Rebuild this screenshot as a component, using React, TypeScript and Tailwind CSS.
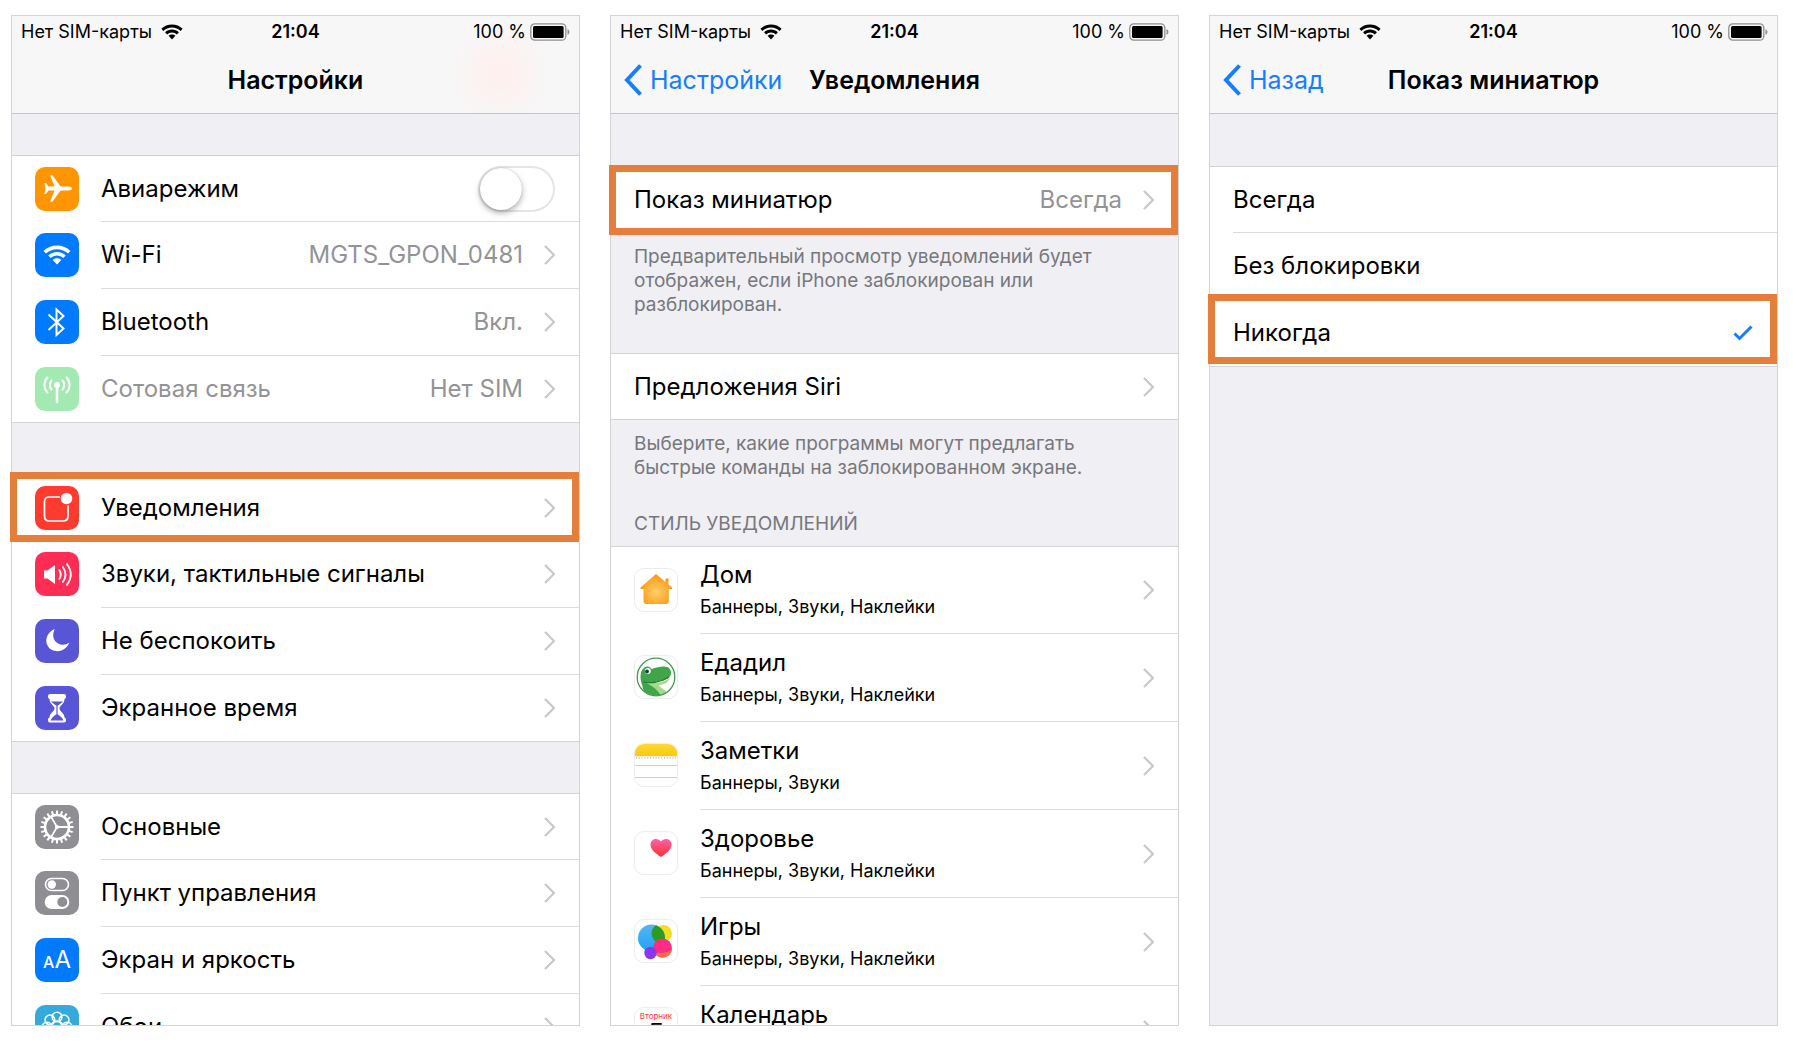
import { useState, type ReactNode } from "react";
import clsx from "clsx";

interface RowData {
  label: string;
  value?: string;
  icon?: ReactNode;
  disabled?: boolean;
  highlight?: string;
}

interface AppData {
  name: string;
  styles: string;
  icon: ReactNode;
}

const GEAR_TEETH = Array.from({ length: 20 }, (_, i) => i * 18);
const PETALS = Array.from({ length: 8 }, (_, i) => i * 45);

function WifiGlyph({ className }: { className?: string }) {
  return (
    <svg viewBox="0 0 28 20" className={className} fill="currentColor" aria-hidden="true">
      <path d="M14 0.5c5.2 0 10 2 13.5 5.4l-2.5 2.7C22.100 5.800 18.200 4.200 14 4.200S5.900 5.800 3 8.600L.5 5.900C4 2.500 8.800.5 14 .5z" />
      <path d="M14 6.900c3.400 0 6.500 1.300 8.800 3.500l-2.600 2.700c-1.600-1.500-3.800-2.500-6.200-2.500s-4.600 1-6.200 2.500l-2.600-2.700C7.500 8.200 10.600 6.900 14 6.900z" />
      <path d="M14 13.200c1.700 0 3.200.6 4.300 1.700L14 19.500l-4.300-4.600c1.100-1.100 2.600-1.700 4.300-1.700z" />
    </svg>
  );
}

function Tile({ color, children }: { color: string; children: ReactNode }) {
  return (
    <span
      className={clsx(
        "flex size-11 shrink-0 items-center justify-center overflow-hidden rounded-[10px] text-white",
        color,
      )}
    >
      {children}
    </span>
  );
}

function AppTile({ children }: { children: ReactNode }) {
  return (
    <span className="flex size-11 shrink-0 overflow-hidden rounded-[10px] border border-[#ececee] bg-white">
      {children}
    </span>
  );
}

function PlaneIcon() {
  return (
    <Tile color="bg-[#ff9500]">
      <svg viewBox="0 0 44 44" className="size-11" fill="currentColor" aria-hidden="true">
        <path d="M37 21.500c0 1.300-1.800 2-4 2h-7.400l-8.200 11.200h-2.300l4.400-11.200h-5.900l-2.700 3.400H9.200l1.300-5.400-1.300-5.400h1.700l2.700 3.400h5.900L15.100 8.300h2.300l8.200 11.200H33c2.200 0 4 .7 4 2z" />
      </svg>
    </Tile>
  );
}

function WifiIcon() {
  return (
    <Tile color="bg-[#007aff]">
      <WifiGlyph className="h-5 w-7" />
    </Tile>
  );
}

function BluetoothIcon() {
  return (
    <Tile color="bg-[#007aff]">
      <svg viewBox="0 0 44 44" className="size-11" fill="none" stroke="currentColor" strokeWidth="2" aria-hidden="true">
        <path d="M13.500 14.500l15 14-7 6.500V9.500l7 6.500-15 14" />
      </svg>
    </Tile>
  );
}

function CellularIcon() {
  return (
    <Tile color="bg-[#a3e9b2]">
      <svg viewBox="0 0 44 44" className="size-11" fill="none" stroke="currentColor" strokeWidth="2" strokeLinecap="round" aria-hidden="true">
        <circle cx="22" cy="18" r="3" fill="currentColor" stroke="none" />
        <path d="M22 19v16" strokeWidth="2.500" />
        <path d="M16.500 13.500c-2.200 2.500-2.200 6.500 0 9M12.500 10.500c-4.200 4.300-4.200 10.700 0 15M27.500 13.500c2.200 2.500 2.200 6.500 0 9M31.500 10.500c4.200 4.300 4.200 10.700 0 15" />
      </svg>
    </Tile>
  );
}

function NotificationsIcon() {
  return (
    <Tile color="bg-[#ff3b30]">
      <svg viewBox="0 0 44 44" className="size-11" aria-hidden="true">
        <path d="M25 11H14.500Q9.500 11 9.500 16v14q0 5 5 5h13.500q5 0 5-5V19.500" fill="none" stroke="#fff" strokeWidth="1.700" />
        <circle cx="31.500" cy="12.500" r="5.800" fill="#fff" />
      </svg>
    </Tile>
  );
}

function SoundsIcon() {
  return (
    <Tile color="bg-[#ff2d55]">
      <svg viewBox="0 0 44 44" className="size-11" aria-hidden="true">
        <path d="M9 18.500h3.500l7.500-5.500v19l-7.500-5.500H9z" fill="#fff" />
        <path d="M24 17.500q3.500 5 0 10M27.500 14.500q6 8 0 16M31.500 11.500q8.500 11 0 22" fill="none" stroke="#fff" strokeWidth="1.800" />
      </svg>
    </Tile>
  );
}

function MoonIcon() {
  return (
    <Tile color="bg-[#5856d6]">
      <svg viewBox="0 0 44 44" className="size-11" fill="#fff" aria-hidden="true">
        <path d="M19.800 10C12.500 13 9.300 20.500 12.500 26.500c4 8 17.500 8 22-3-9 6.500-20.500-2-14.700-13.500z" />
      </svg>
    </Tile>
  );
}

function HourglassIcon() {
  return (
    <Tile color="bg-[#5856d6]">
      <svg viewBox="0 0 44 44" className="size-11" aria-hidden="true">
        <path d="M15 8h14q2 0 2 2v1q0 1.500-1.500 2c0 5-5 6.500-5 9.500s5 4.500 5 9q1.500.5 1.500 2v1q0 2-2 2H15q-2 0-2-2v-1q0-1.500 1.500-2c0-4.500 5-6 5-9s-5-4.500-5-9.500Q13 12.500 13 11v-1q0-2 2-2z" fill="#fff" />
        <path d="M17.500 16h9L22 19.500zM22 20v9M16.500 34q.5-2 5.500-5.500 5 3.500 5.500 5.500z" fill="#5856d6" stroke="#5856d6" strokeWidth="1.200" />
      </svg>
    </Tile>
  );
}

function GearIcon() {
  return (
    <Tile color="bg-[#8e8e93]">
      <svg viewBox="0 0 44 44" className="size-11" fill="none" stroke="#fff" aria-hidden="true">
        <circle cx="22" cy="22" r="12" strokeWidth="2.600" />
        {GEAR_TEETH.map((angle) => (
          <path key={angle} d="M22 9.500V5.500" strokeWidth="2" transform={`rotate(${angle} 22 22)`} />
        ))}
        <path d="M22 22h12M22 22l-6-10.400M22 22l-6 10.400" strokeWidth="1.800" />
        <circle cx="22" cy="22" r="2" fill="#fff" stroke="none" />
      </svg>
    </Tile>
  );
}

function ControlsIcon() {
  return (
    <Tile color="bg-[#8e8e93]">
      <svg viewBox="0 0 44 44" className="size-11" aria-hidden="true">
        <rect x="10.500" y="7.500" width="23" height="12" rx="6" fill="none" stroke="#fff" strokeWidth="1.600" />
        <circle cx="16.800" cy="13.500" r="4.200" fill="#fff" />
        <rect x="9.700" y="24" width="24.600" height="14" rx="7" fill="#fff" />
        <circle cx="27.300" cy="31" r="5" fill="#8e8e93" />
      </svg>
    </Tile>
  );
}

function DisplayIcon() {
  return (
    <Tile color="bg-[#007aff]">
      <span className="flex items-baseline leading-none" aria-hidden="true">
        <span className="text-base font-medium">A</span>
        <span className="text-2xl">A</span>
      </span>
    </Tile>
  );
}

function WallpaperIcon() {
  return (
    <Tile color="bg-[#34aadc]">
      <svg viewBox="0 0 44 44" className="size-11" fill="none" stroke="#fff" strokeWidth="1.600" aria-hidden="true">
        {PETALS.map((angle) => (
          <circle key={angle} cx="22" cy="12" r="4.800" transform={`rotate(${angle} 22 22)`} />
        ))}
        <circle cx="22" cy="22" r="6" />
      </svg>
    </Tile>
  );
}

function HomeAppIcon() {
  return (
    <AppTile>
      <svg viewBox="1 1 42 42" className="size-full" aria-hidden="true">
        <defs>
          <radialGradient id="home-fill" cx="50%" cy="60%" r="60%">
            <stop offset="0" stopColor="#ffd06a" />
            <stop offset="1" stopColor="#f9960f" />
          </radialGradient>
        </defs>
        <path d="M22 6l9.500 8v-3.500h3v6l3.500 3v1.500h-3.200V33q0 3-3 3H12.500q-3 0-3-3V21H6.500v-1.500z" fill="url(#home-fill)" />
      </svg>
    </AppTile>
  );
}

function EdadilAppIcon() {
  return (
    <AppTile>
      <svg viewBox="1 1 42 42" className="size-full" aria-hidden="true">
        <defs>
          <clipPath id="edadil-clip">
            <circle cx="22" cy="22" r="18.500" />
          </clipPath>
        </defs>
        <g clipPath="url(#edadil-clip)">
          <path d="M8 15c3-5 8-4 9.500-1 6-2 12-3.500 16-2 4 2 4.500 7 2 10-3 3.500-8 3.500-14 4.500l10 14-8 3C15 42 9 38 8.500 31 6.500 26 5.500 20 8 15z" fill="#3fa548" />
          <path d="M11 27c8 2 17 1.500 25-4-2 5-7 7-12 7l10 8-7 4c-2-7-9-11-16-15z" fill="#a5d98a" />
          <path d="M9 27c7 1.500 18 .5 26-5" fill="none" stroke="#257c35" strokeWidth="1.200" />
        </g>
        <circle cx="13.800" cy="16" r="3" fill="#fff" />
        <circle cx="13" cy="16.500" r="1.900" fill="#173a4c" />
        <circle cx="22" cy="22" r="18.800" fill="none" stroke="#419b50" strokeWidth="1.300" />
      </svg>
    </AppTile>
  );
}

function NotesAppIcon() {
  return (
    <AppTile>
      <svg viewBox="1 1 42 42" className="size-full" aria-hidden="true">
        <defs>
          <linearGradient id="notes-top" x1="0" y1="0" x2="0" y2="1">
            <stop offset="0" stopColor="#fdd93a" />
            <stop offset="1" stopColor="#f9ca0c" />
          </linearGradient>
        </defs>
        <rect width="44" height="12.500" fill="url(#notes-top)" />
        <path d="M0 12.800h44" stroke="#c9b25a" strokeWidth=".8" />
        <path d="M2 15h41" stroke="#b9b9b9" strokeWidth="1.600" strokeDasharray="1 1.800" />
        <path d="M0 22.500h44M0 34.500h44" stroke="#cfcfd8" />
      </svg>
    </AppTile>
  );
}

function HealthAppIcon() {
  return (
    <AppTile>
      <svg viewBox="1 1 42 42" className="size-full" aria-hidden="true">
        <defs>
          <linearGradient id="heart-fill" x1="0" y1="0" x2="0" y2="1">
            <stop offset="0" stopColor="#ff61ad" />
            <stop offset="1" stopColor="#fb2f2c" />
          </linearGradient>
        </defs>
        <path d="M27 26c-6-4-10.500-7.500-10.500-12.500 0-6 7.500-7.500 10.500-3 3-4.500 10.500-3 10.500 3C37.500 18.500 33 22 27 26z" fill="url(#heart-fill)" />
      </svg>
    </AppTile>
  );
}

function GamesAppIcon() {
  return (
    <AppTile>
      <svg viewBox="1 1 42 42" className="size-full" aria-hidden="true">
        <defs>
          <linearGradient id="games-blue" x1="0" y1="0" x2="0" y2="1">
            <stop offset="0" stopColor="#55b5ef" />
            <stop offset="1" stopColor="#1fa2fb" />
          </linearGradient>
          <clipPath id="games-clip">
            <circle cx="17.500" cy="19" r="13.500" />
          </clipPath>
        </defs>
        <circle cx="29.500" cy="14.500" r="8.500" fill="#f5de1b" />
        <circle cx="17.500" cy="19" r="13.500" fill="url(#games-blue)" />
        <circle cx="27.500" cy="14.500" r="10" fill="#2c9b22" clipPath="url(#games-clip)" />
        <circle cx="28.500" cy="29" r="9.500" fill="#ff2c85" />
        <path d="M20 33a9.500 9.500 0 0 0 18-3c-5 4-11 5-18 3z" fill="#ff6a45" />
        <circle cx="16.500" cy="34" r="6.200" fill="#8a35ef" />
      </svg>
    </AppTile>
  );
}

function CalendarAppIcon() {
  return (
    <AppTile>
      <span className="flex w-full flex-col items-center pt-[2px]" aria-hidden="true">
        <span className="text-[8px] leading-3 text-[#ff3b30]">Вторник</span>
        <span className="text-[28px] font-light leading-6">5</span>
      </span>
    </AppTile>
  );
}

function Chevron() {
  return (
    <svg viewBox="0 0 11 20" className="ml-[21px] h-5 w-[11px] shrink-0" fill="none" stroke="#c7c7cc" strokeWidth="2.200" aria-hidden="true">
      <path d="M1 1l9 9-9 9" />
    </svg>
  );
}

function StatusBar() {
  return (
    <div className="grid grid-cols-[1fr_auto_1fr] items-center px-[9px] pt-1 text-[18px] leading-6">
      <span className="flex items-center gap-[9px] whitespace-nowrap">
        Нет SIM-карты
        <WifiGlyph className="h-4 w-[22px]" />
      </span>
      <span className="font-semibold">21:04</span>
      <span className="flex items-center justify-end gap-1">
        100 %
        <svg viewBox="0 0 40 18" className="h-[18px] w-10" aria-hidden="true">
          <rect x=".8" y=".8" width="35" height="16.400" rx="4" fill="none" stroke="#8f8f92" strokeWidth="1.300" />
          <rect x="3" y="3" width="30.600" height="12" rx="1.500" fill="#000" />
          <path d="M37.500 6q2 .8 2 3t-2 3z" fill="#8f8f92" />
        </svg>
      </span>
    </div>
  );
}

interface PhoneProps {
  title: string;
  back?: string;
  glow?: boolean;
  children: ReactNode;
}

function Phone({ title, back, glow, children }: PhoneProps) {
  return (
    <section className="flex min-w-0 flex-col overflow-y-clip border border-[#d4d4d7] bg-[#efeff4]">
      <header
        className={clsx(
          "h-[98px] shrink-0 border-b border-[#c4c4c8] bg-[#f7f7f8]",
          glow && "bg-[radial-gradient(circle_at_86%_60%,#fff0ee_0,#f7f7f8_56px)]",
        )}
      >
        <StatusBar />
        <div className="grid grid-cols-[1fr_auto_1fr] items-center pt-[18px] text-[25px] leading-9">
          {back ? (
            <a href="#" className="flex items-center gap-2 pl-[13px] text-[#147efb]">
              <svg viewBox="0 0 18 32" className="h-8 w-[18px]" fill="none" stroke="currentColor" strokeWidth="4" aria-hidden="true">
                <path d="M16.500 1.500L3 16l13.500 14.500" />
              </svg>
              {back}
            </a>
          ) : (
            <span />
          )}
          <h1 className="whitespace-nowrap font-semibold">{title}</h1>
        </div>
      </header>
      {children}
    </section>
  );
}

function Highlight({ className }: { className: string }) {
  return (
    <span
      className={clsx(
        "pointer-events-none absolute -left-[2px] right-0 z-10 h-[70px] border-[7px] border-[#e47e3a]",
        className,
      )}
    />
  );
}

function Group({ children }: { children: ReactNode }) {
  return <ul className="shrink-0 border-y border-[#d3d3d7] bg-white">{children}</ul>;
}

function SettingsRow({ row }: { row: RowData }) {
  return (
    <li className="group relative">
      <button
        type="button"
        disabled={row.disabled}
        className="flex w-full items-stretch pl-[23px] text-left text-[24px]"
      >
        {row.icon && <span className="mr-[22px] flex items-center">{row.icon}</span>}
        <span className="flex h-[67px] min-w-0 flex-1 items-center border-t border-[#dcdcdf] pr-6 group-first:h-[65px] group-first:border-t-0">
          <span className={clsx("flex-1 truncate", row.disabled && "text-[#939397]")}>
            {row.label}
          </span>
          {row.value && <span className="text-[#939397]">{row.value}</span>}
          <Chevron />
        </span>
      </button>
      {row.highlight && <Highlight className={row.highlight} />}
    </li>
  );
}

function AirplaneRow() {
  const [on, setOn] = useState(false);

  return (
    <li>
      <label className="flex h-[65px] items-center pl-[23px] pr-6 text-[24px]">
        <PlaneIcon />
        <span className="ml-[22px] flex-1">Авиарежим</span>
        <input
          type="checkbox"
          role="switch"
          checked={on}
          onChange={() => setOn((v) => !v)}
          className="h-[46px] w-[77px] appearance-none rounded-full border-2 border-[#e5e5e7] bg-white before:block before:size-[42px] before:rounded-full before:bg-white before:shadow-[0_3px_6px_rgba(0,0,0,0.3),0_0_1px_rgba(0,0,0,0.3)] checked:bg-[#4cd964] checked:before:translate-x-[31px]"
        />
      </label>
    </li>
  );
}

function AppRow({ app }: { app: AppData }) {
  return (
    <li className="group">
      <button type="button" className="flex w-full items-stretch pl-[23px] text-left">
        <span className="mr-[22px] flex items-center">{app.icon}</span>
        <span className="flex h-[88px] flex-1 items-center border-t border-[#dcdcdf] pr-6 group-first:h-[86px] group-first:border-t-0">
          <span className="flex flex-1 flex-col pb-0.5">
            <span className="text-[24px] leading-9">{app.name}</span>
            <span className="text-[18px] leading-7">{app.styles}</span>
          </span>
          <Chevron />
        </span>
      </button>
    </li>
  );
}

const CONNECTIVITY: RowData[] = [
  { label: "Wi-Fi", value: "MGTS_GPON_0481", icon: <WifiIcon /> },
  { label: "Bluetooth", value: "Вкл.", icon: <BluetoothIcon /> },
  { label: "Сотовая связь", value: "Нет SIM", icon: <CellularIcon />, disabled: true },
];

const ALERTS: RowData[] = [
  { label: "Уведомления", icon: <NotificationsIcon />, highlight: "-top-[3px]" },
  { label: "Звуки, тактильные сигналы", icon: <SoundsIcon /> },
  { label: "Не беспокоить", icon: <MoonIcon /> },
  { label: "Экранное время", icon: <HourglassIcon /> },
];

const GENERAL: RowData[] = [
  { label: "Основные", icon: <GearIcon /> },
  { label: "Пункт управления", icon: <ControlsIcon /> },
  { label: "Экран и яркость", icon: <DisplayIcon /> },
  { label: "Обои", icon: <WallpaperIcon /> },
];

const APPS: AppData[] = [
  { name: "Дом", styles: "Баннеры, Звуки, Наклейки", icon: <HomeAppIcon /> },
  { name: "Едадил", styles: "Баннеры, Звуки, Наклейки", icon: <EdadilAppIcon /> },
  { name: "Заметки", styles: "Баннеры, Звуки", icon: <NotesAppIcon /> },
  { name: "Здоровье", styles: "Баннеры, Звуки, Наклейки", icon: <HealthAppIcon /> },
  { name: "Игры", styles: "Баннеры, Звуки, Наклейки", icon: <GamesAppIcon /> },
  { name: "Календарь", styles: "Баннеры, Звуки, Наклейки", icon: <CalendarAppIcon /> },
];

const PREVIEW_OPTIONS = ["Всегда", "Без блокировки", "Никогда"];

function SettingsScreen() {
  return (
    <Phone title="Настройки" glow>
      <div className="flex flex-col gap-[51px] pt-[41px]">
        <Group>
          <AirplaneRow />
          {CONNECTIVITY.map((row) => (
            <SettingsRow key={row.label} row={row} />
          ))}
        </Group>
        <Group>
          {ALERTS.map((row) => (
            <SettingsRow key={row.label} row={row} />
          ))}
        </Group>
        <Group>
          {GENERAL.map((row) => (
            <SettingsRow key={row.label} row={row} />
          ))}
        </Group>
      </div>
    </Phone>
  );
}

function NotificationsScreen() {
  return (
    <Phone title="Уведомления" back="Настройки">
      <div className="flex flex-col pt-[52px]">
        <Group>
          <SettingsRow row={{ label: "Показ миниатюр", value: "Всегда", highlight: "-top-[2px]" }} />
        </Group>
        <p className="px-[23px] pb-9 pt-3 text-[19px] leading-6 text-[#77777c]">
          Предварительный просмотр уведомлений будет
          <br />
          отображен, если iPhone заблокирован или
          <br />
          разблокирован.
        </p>
        <Group>
          <SettingsRow row={{ label: "Предложения Siri" }} />
        </Group>
        <p className="px-[23px] pt-3 text-[19px] leading-6 text-[#77777c]">
          Выберите, какие программы могут предлагать
          <br />
          быстрые команды на заблокированном экране.
        </p>
        <h2 className="px-[23px] pb-2.5 pt-8 text-[19px] leading-6 text-[#77777c]">
          СТИЛЬ УВЕДОМЛЕНИЙ
        </h2>
        <Group>
          {APPS.map((app) => (
            <AppRow key={app.name} app={app} />
          ))}
        </Group>
      </div>
    </Phone>
  );
}

function PreviewScreen() {
  const [selected, setSelected] = useState("Никогда");

  return (
    <Phone title="Показ миниатюр" back="Назад">
      <div className="pt-[52px]">
        <Group>
          {PREVIEW_OPTIONS.map((option) => (
            <li key={option} className="group relative pl-[23px]">
              <label className="flex h-[67px] items-center border-t border-[#dcdcdf] pr-6 text-[24px] group-first:h-[65px] group-first:border-t-0">
                <input
                  type="radio"
                  name="preview"
                  className="sr-only"
                  checked={selected === option}
                  onChange={() => setSelected(option)}
                />
                <span className="flex-1">{option}</span>
                {selected === option && (
                  <svg viewBox="0 0 20 16" className="h-4 w-5" fill="none" stroke="#147efb" strokeWidth="3" aria-hidden="true">
                    <path d="M1.500 8.500l5 5L18.500 1.500" />
                  </svg>
                )}
              </label>
              {option === "Никогда" && <Highlight className="-top-[5px]" />}
            </li>
          ))}
        </Group>
      </div>
    </Phone>
  );
}

export default function App() {
  return (
    <main className="grid h-screen grid-cols-3 grid-rows-[minmax(0,1fr)] gap-[30px] bg-white pb-[18px] pl-[11px] pr-[15px] pt-[15px] font-[Inter,'Liberation_Sans',sans-serif] text-black">
      <SettingsScreen />
      <NotificationsScreen />
      <PreviewScreen />
    </main>
  );
}
